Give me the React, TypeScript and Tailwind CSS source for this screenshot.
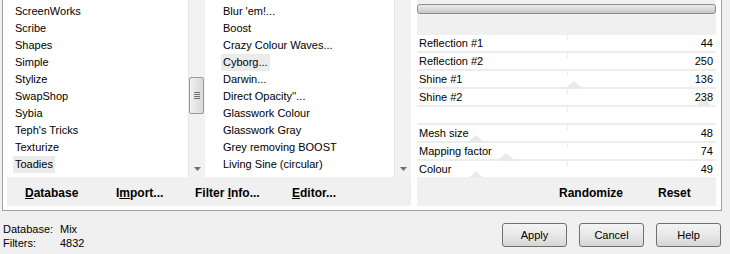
import React from 'react';

const categories = [
  'ScreenWorks',
  'Scribe',
  'Shapes',
  'Simple',
  'Stylize',
  'SwapShop',
  'Sybia',
  "Teph's Tricks",
  'Texturize',
  'Toadies',
  'Tramages',
];

const filters = [
  "Blur 'em!...",
  'Boost',
  'Crazy Colour Waves...',
  'Cyborg...',
  'Darwin...',
  "Direct Opacity''...",
  'Glasswork Colour',
  'Glasswork Gray',
  'Grey removing BOOST',
  'Living Sine (circular)',
  'Living Sine (linear)',
];

// null = blank spacer row, tri = x offset of the faint slider marker
const params: ({ label: string; value: number; tri?: number } | null)[] = [
  { label: 'Reflection #1', value: 44 },
  { label: 'Reflection #2', value: 250 },
  { label: 'Shine #1', value: 136, tri: 148 },
  { label: 'Shine #2', value: 238, tri: 278 },
  null,
  { label: 'Mesh size', value: 48, tri: 50 },
  { label: 'Mapping factor', value: 74, tri: 80 },
  { label: 'Colour', value: 49, tri: 50 },
];

const Scrollbar = ({ thumb }: { thumb: boolean }) => (
  <div className="relative w-[17px] h-full bg-[#f2f2f2] border-l border-[#e6e6e6] flex flex-col">
    {thumb && (
      <div className="absolute left-[0px] top-[77px] w-[15px] h-[37px] rounded-[2px] border border-[#9a9a9a] bg-gradient-to-r from-[#f0f0f0] to-[#d8d8d8] flex flex-col items-center justify-center gap-[1px]">
        <div className="w-[6px] h-[1px] bg-[#707070]" />
        <div className="w-[6px] h-[1px] bg-[#707070]" />
        <div className="w-[6px] h-[1px] bg-[#707070]" />
        <div className="w-[6px] h-[1px] bg-[#707070]" />
      </div>
    )}
    <div className="mt-auto h-[17px] flex items-center justify-center">
      <svg width="7" height="4" viewBox="0 0 7 4">
        <path d="M0 0 L7 0 L3.5 4 Z" fill="#707070" />
      </svg>
    </div>
  </div>
);

const ListBox = ({
  items,
  selected,
  pad,
  width,
  thumb,
}: {
  items: string[];
  selected: string;
  pad: string;
  width: string;
  thumb: boolean;
}) => (
  <div className={`flex h-[177px] ${width}`}>
    <div className={`flex-1 overflow-hidden pt-[3px] ${pad}`}>
      {items.map((item) => (
        <div key={item} className="h-[17px] flex items-center">
          <span
            className={`px-[2px] h-[17px] leading-[17px] whitespace-nowrap ${
              item === selected ? 'bg-[#ebebeb]' : ''
            }`}
          >
            {item}
          </span>
        </div>
      ))}
    </div>
    <Scrollbar thumb={thumb} />
  </div>
);

const Triangle = () => (
  <svg width="18" height="8" viewBox="0 0 18 8">
    <path d="M0 8 L9 0 L18 8 Z" fill="#eaeaea" />
  </svg>
);

export default function App() {
  return (
    <div className="w-[730px] h-[254px] overflow-hidden bg-[#f0f0f0] text-[11px] text-black font-['Liberation_Sans',Arial,sans-serif]">
      {/* FRAME */}
      <div className="ml-[2px] w-[720px] h-[211px] bg-white border-l border-r border-b border-[#a0a0a0] flex pl-[4px]">
        {/* LISTS + BUTTONS */}
        <div className="w-[404px] flex flex-col">
          <div className="flex">
            <ListBox items={categories} selected="Toadies" pad="pl-[6px]" width="w-[198px]" thumb />
            <div className="w-[5px]" />
            <ListBox items={filters} selected="Cyborg..." pad="pl-[11px]" width="w-[201px]" thumb={false} />
          </div>
          <div className="h-[29px] bg-[#f0f0f0] flex items-center pt-[3px] pl-[18px] text-[12px] font-bold">
            <span className="w-[91px]">
              <u>D</u>atabase
            </span>
            <span className="w-[79px]">
              I<u>m</u>port...
            </span>
            <span className="w-[97px]">
              Filter <u>I</u>nfo...
            </span>
            <span>
              <u>E</u>ditor...
            </span>
          </div>
        </div>

        <div className="w-[6px]" />

        {/* PARAMETERS */}
        <div className="w-[299px] flex flex-col">
          <div className="h-[35px] bg-[#f0f0f0] pt-[4px]">
            <div className="h-[10px] rounded-[3px] border border-[#8e8e8e] bg-gradient-to-b from-[#ececec] via-[#d9d9d9] to-[#c6c6c6]" />
          </div>
          <div className="h-[142px] overflow-hidden">
            {params.map((p, i) => (
              <div
                key={i}
                className="relative h-[18px] border-b-2 border-[#ededed] flex items-center justify-between pl-[2px] pr-[3px]"
              >
                <div className="absolute left-[150px] top-0 w-[1px] h-[5px] bg-[#ededed]" />
                {p && p.tri !== undefined && (
                  <div className="absolute bottom-[-2px]" style={{ left: p.tri }}>
                    <Triangle />
                  </div>
                )}
                {p && <span className="relative">{p.label}</span>}
                {p && <span className="relative">{p.value}</span>}
              </div>
            ))}
          </div>
          <div className="h-[29px] bg-[#f0f0f0] flex items-center pt-[3px] pl-[142px] text-[12px] font-bold">
            <span className="w-[99px]">Randomize</span>
            <span>Reset</span>
          </div>
        </div>
      </div>

      {/* STATUS + DIALOG BUTTONS */}
      <div className="flex items-start mt-[12px]">
        <div className="ml-[3px] mt-[-1px] leading-[14px] grid grid-cols-[57px_auto]">
          <span>Database:</span>
          <span>Mix</span>
          <span>Filters:</span>
          <span>4832</span>
        </div>
        <div className="ml-auto mr-[9px] flex gap-[12px]">
          {['Apply', 'Cancel', 'Help'].map((label) => (
            <button
              key={label}
              className="w-[65px] h-[24px] rounded-[3px] border border-[#707070] bg-gradient-to-b from-[#f4f4f4] via-[#e8e8e8] to-[#d6d6d6] text-[11px] text-black"
            >
              {label}
            </button>
          ))}
        </div>
      </div>
    </div>
  );
}
